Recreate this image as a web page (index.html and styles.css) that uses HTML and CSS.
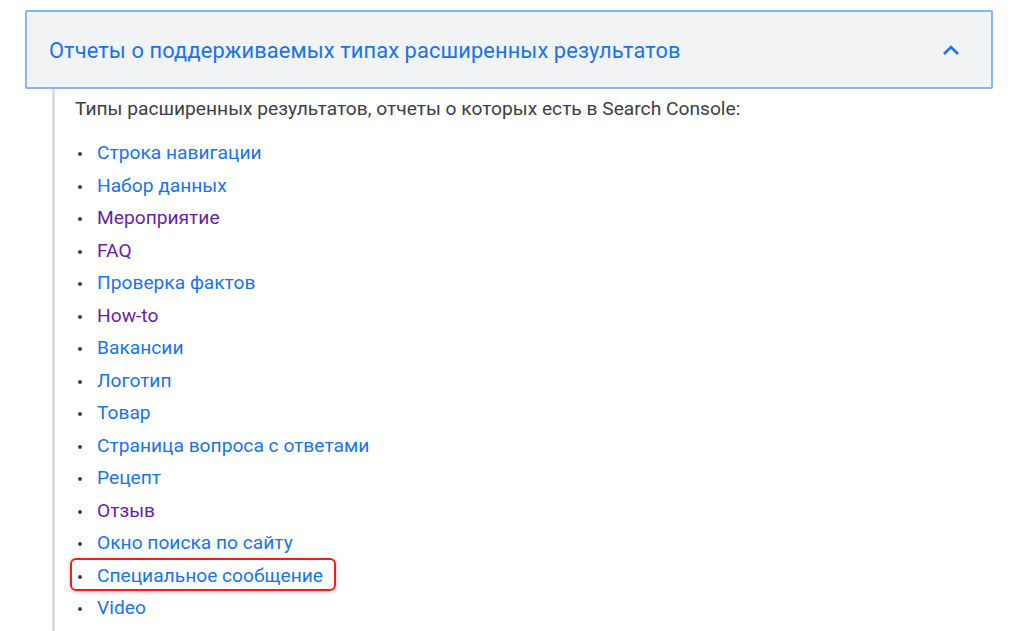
FILE: index.html
```html
<!DOCTYPE html>
<html lang="ru">
<head>
    <meta charset="UTF-8">
    <title>Search Console</title>
    <link rel="stylesheet" href="styles.css">
</head>
<body>
<div class="expandable">
    <div class="expandable-head">
        <h3>Отчеты о поддерживаемых типах расширенных результатов</h3>
        <svg class="chevron" width="20" height="20" viewBox="0 0 20 20">
            <path d="M3 14 L10 7 L17 14" fill="none" stroke="#1a73e8" stroke-width="2.6"/>
        </svg>
    </div>
    <div class="expandable-body">
        <p>Типы расширенных результатов, отчеты о которых есть в Search Console:</p>
        <ul class="types">
            <li><a href="#">Строка навигации</a></li>
            <li><a href="#">Набор данных</a></li>
            <li><a href="#" class="visited">Мероприятие</a></li>
            <li><a href="#" class="visited">FAQ</a></li>
            <li><a href="#">Проверка фактов</a></li>
            <li><a href="#" class="visited">How-to</a></li>
            <li><a href="#">Вакансии</a></li>
            <li><a href="#">Логотип</a></li>
            <li><a href="#">Товар</a></li>
            <li><a href="#">Страница вопроса с ответами</a></li>
            <li><a href="#">Рецепт</a></li>
            <li><a href="#" class="visited">Отзыв</a></li>
            <li><a href="#">Окно поиска по сайту</a></li>
            <li class="marked"><a href="#">Специальное сообщение</a></li>
            <li><a href="#">Video</a></li>
        </ul>
    </div>
</div>
</body>
</html>
```

FILE: styles.css
```css
body {
    margin: 0;
    padding: 10px 0 0 25px;
    background: #fff;
    font-family: Roboto, "Noto Sans", Arial, sans-serif;
    color: #3c4043;
}

.expandable {
    width: 968px;
}

.expandable-head {
    box-sizing: border-box;
    height: 79px;
    display: flex;
    align-items: center;
    justify-content: space-between;
    padding: 2px 30px 0 22px;
    background: #f1f3f4;
    border: 2px solid #8ab4f8;
    border-radius: 2px;
}

.expandable-head h3 {
    margin: 0;
    font-size: 21.8px;
    font-weight: 400;
    color: #1a73e8;
    letter-spacing: 0.12px;
}

.chevron {
    display: block;
    margin-top: -2px;
}

.expandable-body {
    margin-left: 27px;
    padding: 6px 0 0 20px;
    border-left: 3px solid #dadce0;
    height: 560px;
}

.expandable-body p {
    margin: 0;
    font-size: 19.2px;
    line-height: 28px;
    color: #3c4043;
}

.types {
    list-style: none;
    margin: 14px 0 0;
    padding: 0;
}

.types li {
    position: relative;
    font-size: 19.2px;
    line-height: 32.5px;
    padding-left: 22px;
}

.types li::before {
    content: "";
    position: absolute;
    left: 3px;
    top: 15px;
    width: 4px;
    height: 4px;
    border-radius: 50%;
    background: #3c4043;
}

.types a {
    color: #1a73e8;
    text-decoration: none;
}

.types a.visited {
    color: #681da8;
}

.types li.marked::after {
    content: "";
    position: absolute;
    left: -5px;
    top: -2px;
    width: 262px;
    height: 29px;
    border: 2px solid #f21d1d;
    border-radius: 6px;
    box-shadow: 0 1px 4px rgba(0, 0, 0, 0.25);
}
```
